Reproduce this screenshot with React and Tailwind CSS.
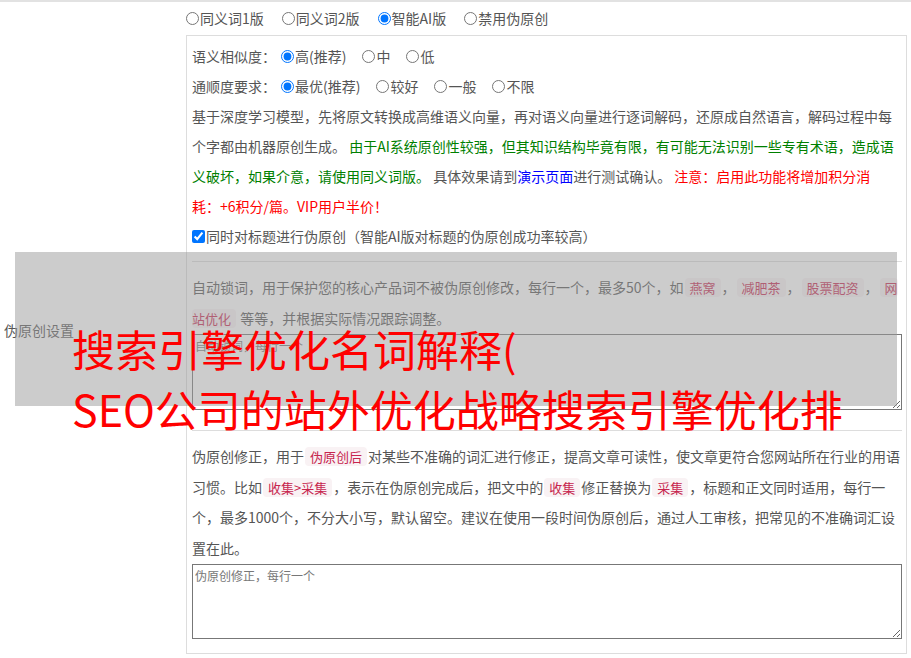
import React from "react";

const Radio = ({ name, checked, label, className = "" }) => (
  <label className={`inline-flex items-center ${className}`}>
    <input
      type="radio"
      name={name}
      defaultChecked={checked}
      className="w-[13px] h-[13px] m-0 mr-px shrink-0"
    />
    <span>{label}</span>
  </label>
);

const Tag = ({ children, className = "px-[5px] mx-[1px]" }) => (
  <span className={`bg-[#f9f2f4] text-[#c7254e] text-[13px] leading-none rounded-[4px] ${className}`}>
    {children}
  </span>
);

export default function App() {
  return (
    <div className="relative w-[911px] h-[658px] overflow-hidden bg-white text-[14px] text-[#555] font-['Noto_Sans_CJK_SC','Noto_Sans',sans-serif]">
      <div className="flex h-[658px] border-t-2 border-[#e2e2e2]">
        <div className="w-[186px] shrink-0 flex items-center pl-[4px]">伪原创设置</div>
        <div className="flex-1">
          <div className="h-[33px] flex items-center gap-[18px]">
            <Radio name="ver" label="同义词1版" />
            <Radio name="ver" label="同义词2版" />
            <Radio name="ver" label="智能AI版" checked />
            <Radio name="ver" label="禁用伪原创" />
          </div>
          <div className="w-[721px] border border-[#dddddd] pl-[5px] pr-[4px] pt-[5px] pb-[14px]">
            <div className="leading-[30px]">
              <div className="flex items-center h-[30px]">
                <span className="mr-[5px]">语义相似度：</span>
                <Radio name="sim" label="高(推荐)" checked className="mr-[16px]" />
                <Radio name="sim" label="中" className="mr-[16px]" />
                <Radio name="sim" label="低" />
              </div>
              <div className="flex items-center h-[30px]">
                <span className="mr-[5px]">通顺度要求：</span>
                <Radio name="flu" label="最优(推荐)" checked className="mr-[16px]" />
                <Radio name="flu" label="较好" className="mr-[16px]" />
                <Radio name="flu" label="一般" className="mr-[16px]" />
                <Radio name="flu" label="不限" />
              </div>
              <p>
                基于深度学习模型，先将原文转换成高维语义向量，再对语义向量进行逐词解码，还原成自然语言，解码过程中每
                <br />
                个字都由机器原创生成。{" "}
                <span className="text-[#008000]">
                  由于AI系统原创性较强，但其知识结构毕竟有限，有可能无法识别一些专有术语，造成语
                  <br />
                  义破坏，如果介意，请使用同义词版。
                </span>{" "}
                具体效果请到<span className="text-[#0000ff]">演示页面</span>进行测试确认。{" "}
                <span className="text-[#ff0000]">
                  注意：启用此功能将增加积分消
                  <br />
                  耗：+6积分/篇。VIP用户半价！
                </span>
              </p>
              <label className="flex items-center h-[30px]">
                <input type="checkbox" defaultChecked className="w-[13px] h-[13px] m-0 mr-px shrink-0" />
                <span>同时对标题进行伪原创（智能AI版对标题的伪原创成功率较高）</span>
              </label>
            </div>

            <div className="mt-[10px] border-t border-[#dddddd]" />

            <div className="mt-[10px]">
              <p className="leading-[31px]">
                自动锁词，用于保护您的核心产品词不被伪原创修改，每行一个，最多50个，如<Tag>燕窝</Tag>，<Tag>减肥茶</Tag>，<Tag>股票配资</Tag>，<Tag className="pl-[5px] ml-[1px]">网</Tag>
                <br />
                <Tag className="pr-[5px] mr-[1px]">站优化</Tag> 等等，并根据实际情况跟踪调整。
              </p>
              <textarea
                placeholder="自动锁词，每行一个"
                className="block w-full h-[76px] border border-[#777] p-[2px] text-[12px] placeholder:text-[#777] text-[#333]"
              />
            </div>

            <div className="mt-[20px] border-t border-[#dddddd]" />

            <div className="mt-[10px]">
              <p className="leading-[30.67px]">
                伪原创修正，用于<Tag>伪原创后</Tag>对某些不准确的词汇进行修正，提高文章可读性，使文章更符合您网站所在行业的用语
                <br />
                习惯。比如<Tag>收集&gt;采集</Tag>，表示在伪原创完成后，把文中的<Tag>收集</Tag>修正替换为<Tag>采集</Tag>，标题和正文同时适用，每行一
                <br />
                个，最多1000个，不分大小写，默认留空。建议在使用一段时间伪原创后，通过人工审核，把常见的不准确词汇设
                <br />
                置在此。
              </p>
              <textarea
                placeholder="伪原创修正，每行一个"
                className="block w-full h-[75px] border border-[#777] p-[2px] text-[12px] placeholder:text-[#777] text-[#333]"
              />
            </div>
          </div>
        </div>
      </div>

      <div className="absolute left-[15px] top-[252px] w-[882px] h-[154px] bg-[rgba(153,153,153,0.5)]">
        <div className="pl-[57px] pt-[66px] text-[43px] leading-[60px] text-[#ff0000] whitespace-nowrap">
          <div>搜索引擎优化名词解释(</div>
          <div>SEO公司的站外优化战略搜索引擎优化排</div>
        </div>
      </div>
    </div>
  );
}
